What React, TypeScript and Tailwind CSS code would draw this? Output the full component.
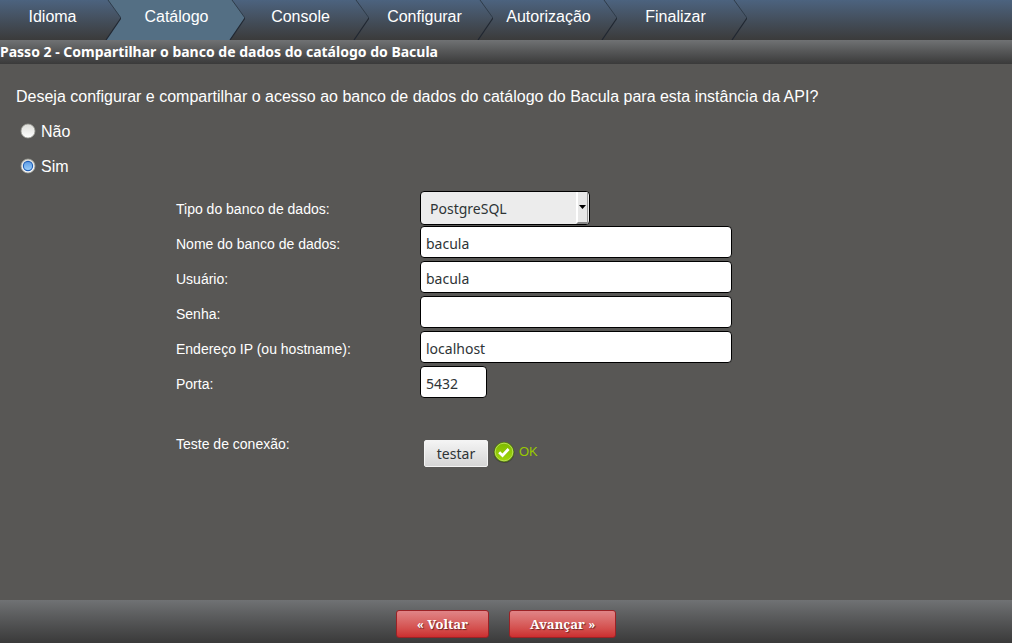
import { useState } from "react";
import type { ReactNode } from "react";
import clsx from "clsx";

const STEPS = [
  { label: "Idioma", width: "w-[121px]" },
  { label: "Catálogo", width: "w-[124px]" },
  { label: "Console", width: "w-[124px]" },
  { label: "Configurar", width: "w-[124px]" },
  { label: "Autorização", width: "w-[124px]" },
  { label: "Finalizar", width: "w-[130px]" },
];
const CURRENT = 1;

const INPUT =
  "h-8 rounded-[4px] border border-black bg-white px-[5px] pt-[2px] font-['Noto_Sans',sans-serif] text-sm text-[#2e3436] outline-none";

/** Arrow edge between two steps; the active step tints its own side. */
function Chevron({ left, right }: { left: boolean; right: boolean }) {
  return (
    <svg viewBox="0 0 16 40" className="h-10 w-4 shrink-0" aria-hidden="true">
      {left && <path d="M0 0H3L16 18L1 40H0Z" fill="#546f84" />}
      {right && <path d="M3 0H16V40H1L16 18Z" fill="#546f84" />}
      <path d="M3 0L16 18" fill="none" stroke="#2f3c4a" strokeWidth="1" />
      <path d="M16 18L1 40" fill="none" stroke="#202731" strokeWidth="1.200" />
    </svg>
  );
}

function StepBar() {
  return (
    <ol className="flex h-10 bg-linear-to-b from-[#4c637f] to-[#3b3b3b] text-base text-white">
      {STEPS.map((step, i) => (
        <li key={step.label} aria-current={i === CURRENT ? "step" : undefined} className={clsx("flex shrink-0", step.width)}>
          <span className={clsx("flex-1 pt-[5px] text-center", i > 0 && "pl-[3px]", i === CURRENT && "bg-[#546f84]")}>
            {step.label}
          </span>
          <Chevron left={i === CURRENT} right={i + 1 === CURRENT} />
        </li>
      ))}
    </ol>
  );
}

function Field({ id, label, children }: { id: string; label: string; children: ReactNode }) {
  return (
    <div className="flex h-[35px] items-start">
      <label htmlFor={id} className="w-[244px] shrink-0 pt-2 text-sm leading-5 text-white">
        {label}
      </label>
      {children}
    </div>
  );
}

function OkIcon() {
  return (
    <svg viewBox="0 0 22 22" className="h-[22px] w-[22px]" aria-hidden="true">
      <defs>
        <linearGradient id="ok-fill" x1="0" y1="0" x2="0" y2="1">
          <stop offset="0" stopColor="#7fba00" />
          <stop offset="1" stopColor="#a0d60c" />
        </linearGradient>
      </defs>
      <circle cx="11" cy="11.500" r="10.500" fill="#39402e" opacity="0.700" />
      <circle cx="11" cy="11" r="10" fill="#65920f" />
      <circle cx="11" cy="11" r="8.800" fill="url(#ok-fill)" stroke="#c0e65a" strokeWidth="0.900" />
      <path d="M6.200 11.300L9.500 14.500L15.600 8" fill="none" stroke="#fff" strokeWidth="2.800" />
    </svg>
  );
}

/** Radio dot: pale bevelled disc, with a glossy blue bead when picked. */
function RadioFace({ checked }: { checked: boolean }) {
  return (
    <svg viewBox="0 0 16 16" className="pointer-events-none absolute inset-0 size-4" aria-hidden="true">
      <defs>
        <linearGradient id="radio-face" x1="0" y1="0" x2="0" y2="1">
          <stop offset="0" stopColor="#dcdcd8" />
          <stop offset="1" stopColor="#ffffff" />
        </linearGradient>
        <linearGradient id="radio-bead" x1="0" y1="0" x2="0" y2="1">
          <stop offset="0" stopColor="#5b9be6" />
          <stop offset="1" stopColor="#9dd0fb" />
        </linearGradient>
      </defs>
      <circle cx="8" cy="8" r="7" fill="url(#radio-face)" stroke="#9b9c94" strokeWidth="0.800" />
      {checked && <circle cx="8" cy="8" r="4.600" fill="url(#radio-bead)" stroke="#1f5fb8" strokeWidth="1.100" />}
    </svg>
  );
}

function NavButton({ children }: { children: ReactNode }) {
  return (
    <button
      type="button"
      className="h-7 rounded-[3px] border border-[#9b2226] bg-linear-to-b from-[#e08487] to-[#cc2d2f] px-5 pt-px font-['Noto_Serif','DejaVu_Serif',serif] text-[13px] font-bold text-white text-shadow-[1px_1px_1px_rgba(0,0,0,0.5)]"
    >
      {children}
    </button>
  );
}

export default function App() {
  const [share, setShare] = useState("yes");

  return (
    <div className="flex min-h-screen flex-col bg-[#585755] font-['Liberation_Sans',Arial,sans-serif] text-white">
      <StepBar />
      <h1 className="h-6 bg-linear-to-b from-[#707274] to-[#3a3a3a] font-['Noto_Sans',sans-serif] text-sm leading-6 font-bold">
        Passo 2 - Compartilhar o banco de dados do catálogo do Bacula
      </h1>

      <main className="flex-1 px-4 pt-5">
        <fieldset>
          <legend className="h-[30px] pt-px text-base">
            Deseja configurar e compartilhar o acesso ao banco de dados do catálogo do Bacula para esta instância da API?
          </legend>
          {[
            { value: "no", label: "Não" },
            { value: "yes", label: "Sim" },
          ].map((option) => (
            <label key={option.value} className="flex h-[35px] items-center gap-[5px] pl-1 text-base">
              <span className="relative mb-[2px] size-4">
                <input
                  type="radio"
                  name="share"
                  value={option.value}
                  checked={share === option.value}
                  onChange={() => setShare(option.value)}
                  className="block size-4 appearance-none rounded-full"
                />
                <RadioFace checked={share === option.value} />
              </span>
              {option.label}
            </label>
          ))}
        </fieldset>

        <div className="mt-[7px] ml-40">
          <Field id="db-type" label="Tipo do banco de dados:">
            <div className="relative">
              <select
                id="db-type"
                defaultValue="pgsql"
                className="h-[34px] w-[170px] appearance-none rounded-[4px] border border-black bg-[#ececec] px-[9px] pt-[2px] font-['Noto_Sans',sans-serif] text-sm text-[#2e3436]"
              >
                <option value="pgsql">PostgreSQL</option>
                <option value="mysql">MySQL</option>
                <option value="sqlite">SQLite</option>
              </select>
              <span className="pointer-events-none absolute inset-y-px right-[2px] flex w-3 items-center justify-center border-r border-b-2 border-l-2 border-r-[#999] border-b-[#888] border-l-white bg-[#e8e8e8]">
                <svg viewBox="0 0 7 4" className="h-1 w-[7px]" aria-hidden="true">
                  <path d="M0 0H7L3.500 4Z" fill="#000" />
                </svg>
              </span>
            </div>
          </Field>
          <Field id="db-name" label="Nome do banco de dados:">
            <input id="db-name" type="text" defaultValue="bacula" className={clsx(INPUT, "w-[312px]")} />
          </Field>
          <Field id="db-user" label="Usuário:">
            <input id="db-user" type="text" defaultValue="bacula" className={clsx(INPUT, "w-[312px]")} />
          </Field>
          <Field id="db-password" label="Senha:">
            <input id="db-password" type="password" className={clsx(INPUT, "w-[312px]")} />
          </Field>
          <Field id="db-host" label="Endereço IP (ou hostname):">
            <input id="db-host" type="text" defaultValue="localhost" className={clsx(INPUT, "w-[312px]")} />
          </Field>
          <Field id="db-port" label="Porta:">
            <input id="db-port" type="text" defaultValue="5432" className={clsx(INPUT, "w-[67px]")} />
          </Field>

          <div className="mt-[25px]">
            <Field id="db-test" label="Teste de conexão:">
              <div className="flex items-start pt-[14px] pl-1">
                <button
                  id="db-test"
                  type="button"
                  className="h-[27px] w-16 rounded-[2px] border border-[#f4f4f4] bg-linear-to-b from-[#f4f4f4] to-[#d6d6d6] pt-px font-['Noto_Sans',sans-serif] text-sm text-[#2e3436]"
                >
                  testar
                </button>
                <output htmlFor="db-test" className="flex items-center gap-1 pt-px pl-[5px] text-[13px] text-[#98c900]">
                  <OkIcon />
                  OK
                </output>
              </div>
            </Field>
          </div>
        </div>
      </main>

      <footer className="flex h-[43px] items-start justify-center gap-5 bg-linear-to-b from-[#707274] to-[#3a3a3a] pt-[10px]">
        <NavButton>« Voltar</NavButton>
        <NavButton>Avançar »</NavButton>
      </footer>
    </div>
  );
}
